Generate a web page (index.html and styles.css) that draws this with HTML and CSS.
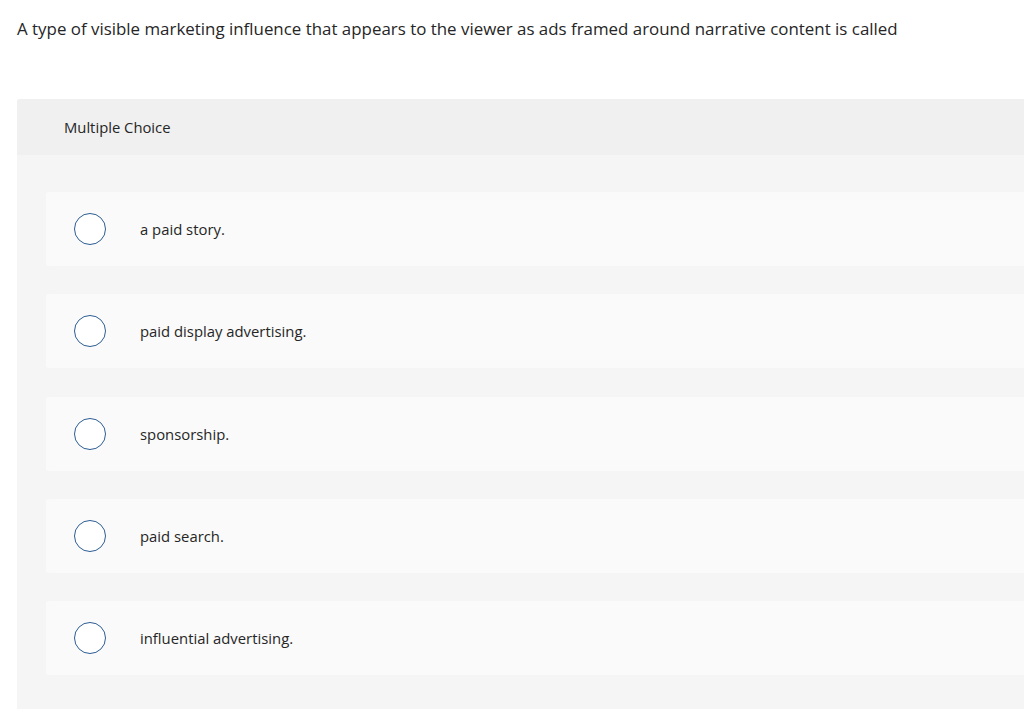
FILE: index.html
```html
<!DOCTYPE html>
<html>
<head>
<meta charset="utf-8">
<link rel="stylesheet" href="styles.css">
</head>
<body>
<div class="page">
  <p class="question">A type of visible marketing influence that appears to the viewer as ads framed around narrative content is called</p>
  <div class="panel">
    <div class="panel-head">Multiple Choice</div>
    <div class="options">
      <div class="option"><span class="radio"></span><span class="label">a paid story.</span></div>
      <div class="option"><span class="radio"></span><span class="label">paid display advertising.</span></div>
      <div class="option"><span class="radio"></span><span class="label">sponsorship.</span></div>
      <div class="option"><span class="radio"></span><span class="label">paid search.</span></div>
      <div class="option"><span class="radio"></span><span class="label">influential advertising.</span></div>
    </div>
  </div>
</div>
</body>
</html>
```
FILE: styles.css
```css
html, body {
  margin: 0;
  padding: 0;
  background: #ffffff;
  overflow: hidden;
}
.page {
  padding: 17px 0 0 17px;
  font-family: "Open Sans", "Liberation Sans", sans-serif;
  color: #262626;
}
.question {
  margin: 0 0 58px 0;
  font-size: 16.9px;
  line-height: 24px;
}
.panel {
  background: #f5f5f5;
  border-top-left-radius: 3px;
}
.panel-head {
  height: 56px;
  background: #f0f0f0;
  border-top-left-radius: 3px;
  display: flex;
  align-items: center;
  padding-left: 47px;
  font-size: 14.8px;
}
.options {
  display: flex;
  flex-direction: column;
  gap: 28.3px;
  padding: 37px 0 40px 29px;
}
.option {
  height: 74px;
  background: #fafafa;
  border-radius: 3px 0 0 3px;
  display: flex;
  align-items: center;
  padding-left: 28px;
  font-size: 14.85px;
}
.radio {
  width: 30px;
  height: 30px;
  border: 1px solid #2c5d94;
  border-radius: 50%;
  background: #ffffff;
  flex: none;
}
.label {
  margin-left: 34px;
}
```
